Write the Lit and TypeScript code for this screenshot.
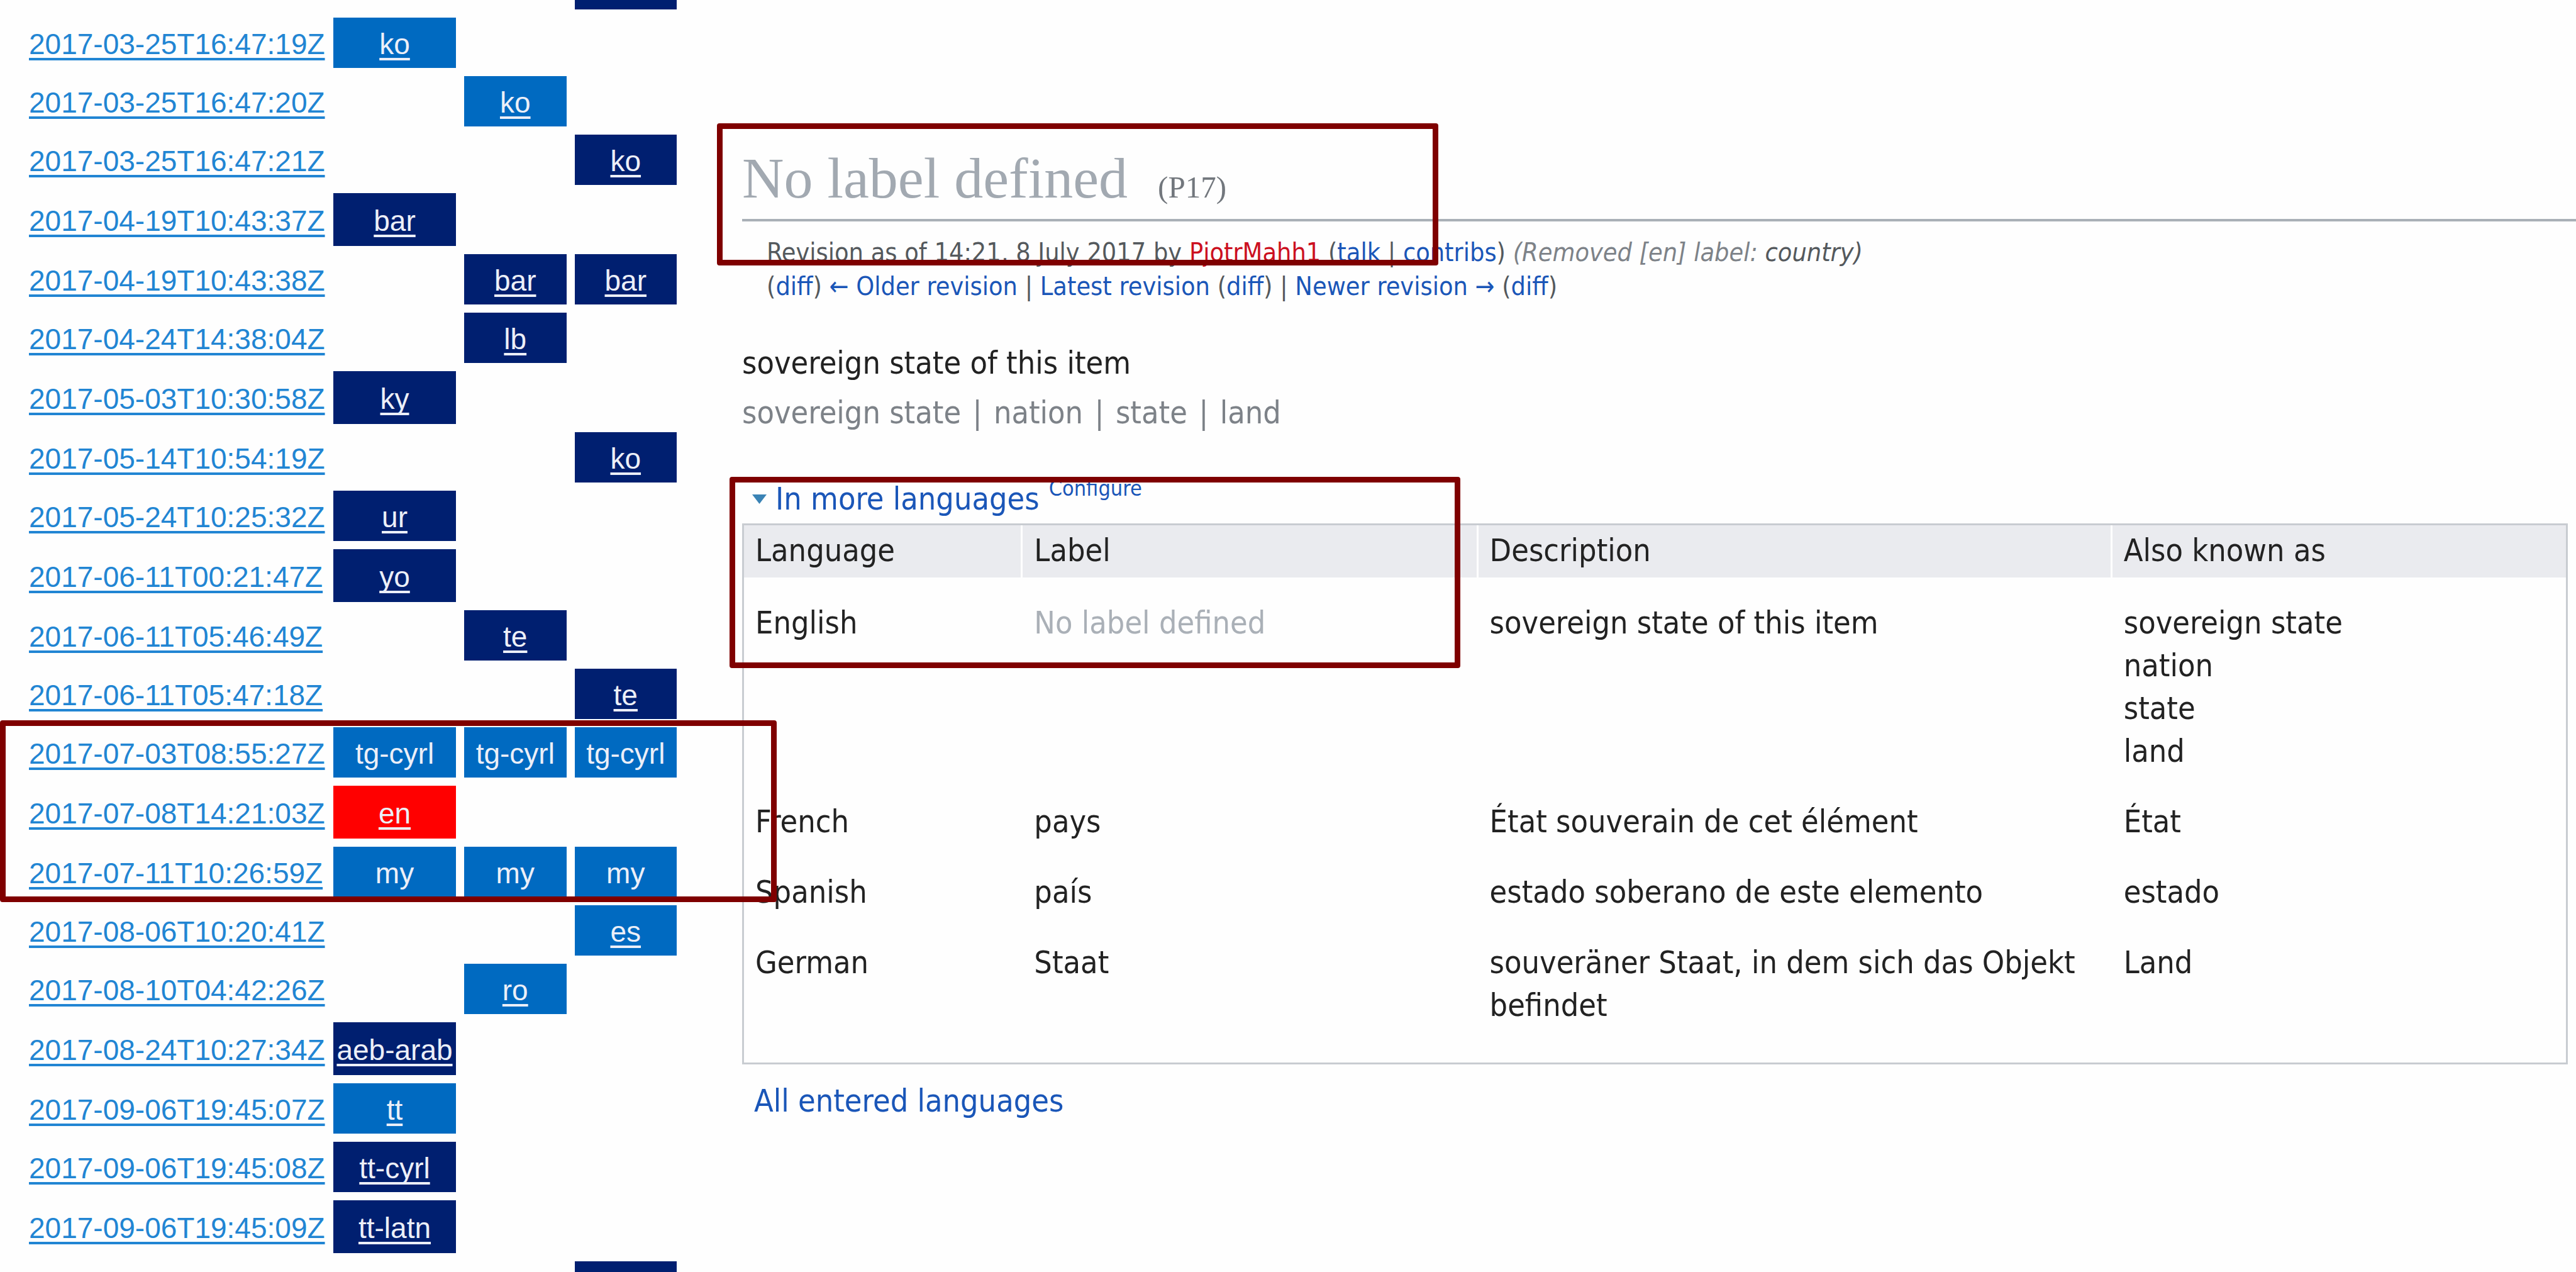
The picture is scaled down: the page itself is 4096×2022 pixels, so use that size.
import { LitElement, html, css, nothing } from "lit";
import { customElement } from "lit/decorators.js";

type Tone = "light" | "dark" | "alert";
interface Edit {
  col: number;
  code: string;
  tone: Tone;
  plain?: boolean;
}
interface Entry {
  time: string;
  edits: Edit[];
  tall?: boolean;
}

const e = (col: number, code: string, tone: Tone = "dark", plain = false): Edit => ({ col, code, tone, plain });

const ENTRIES: Entry[] = [
  { time: "", edits: [e(2, "")] },
  { time: "2017-03-25T16:47:19Z", edits: [e(0, "ko", "light")] },
  { time: "2017-03-25T16:47:20Z", edits: [e(1, "ko", "light")] },
  { time: "2017-03-25T16:47:21Z", edits: [e(2, "ko")] },
  { time: "2017-04-19T10:43:37Z", edits: [e(0, "bar")], tall: true },
  { time: "2017-04-19T10:43:38Z", edits: [e(1, "bar"), e(2, "bar")] },
  { time: "2017-04-24T14:38:04Z", edits: [e(1, "lb")] },
  { time: "2017-05-03T10:30:58Z", edits: [e(0, "ky")], tall: true },
  { time: "2017-05-14T10:54:19Z", edits: [e(2, "ko")] },
  { time: "2017-05-24T10:25:32Z", edits: [e(0, "ur")] },
  { time: "2017-06-11T00:21:47Z", edits: [e(0, "yo")], tall: true },
  { time: "2017-06-11T05:46:49Z", edits: [e(1, "te")] },
  { time: "2017-06-11T05:47:18Z", edits: [e(2, "te")] },
  {
    time: "2017-07-03T08:55:27Z",
    edits: [e(0, "tg-cyrl", "light", true), e(1, "tg-cyrl", "light", true), e(2, "tg-cyrl", "light", true)],
  },
  { time: "2017-07-08T14:21:03Z", edits: [e(0, "en", "alert")], tall: true },
  {
    time: "2017-07-11T10:26:59Z",
    edits: [e(0, "my", "light", true), e(1, "my", "light", true), e(2, "my", "light", true)],
  },
  { time: "2017-08-06T10:20:41Z", edits: [e(2, "es", "light")] },
  { time: "2017-08-10T04:42:26Z", edits: [e(1, "ro", "light")] },
  { time: "2017-08-24T10:27:34Z", edits: [e(0, "aeb-arab")], tall: true },
  { time: "2017-09-06T19:45:07Z", edits: [e(0, "tt", "light")] },
  { time: "2017-09-06T19:45:08Z", edits: [e(0, "tt-cyrl")] },
  { time: "2017-09-06T19:45:09Z", edits: [e(0, "tt-latn")], tall: true },
  { time: "", edits: [e(2, "")] },
];

@customElement("edit-timeline")
export class EditTimeline extends LitElement {
  static styles = css`
    :host {
      display: block;
      font-family: "Liberation Sans", Arial, sans-serif;
      font-size: 46px;
      line-height: 76px;
    }
    .grid {
      margin: -78px 0 0 33px;
      border-collapse: separate;
      border-spacing: 13px;
      table-layout: fixed;
      width: 1056px;
    }
    .time-col { width: 471px; }
    .first-col { width: 195px; }
    td {
      box-sizing: border-box;
      height: 80px;
      padding: 4px 0 0;
      text-align: center;
      vertical-align: middle;
      white-space: nowrap;
    }
    .tall td { height: 84px; }
    .time { text-align: left; }
    a {
      color: #eceff8;
      text-decoration: underline 4px;
      text-underline-offset: 6px;
      text-decoration-skip-ink: none;
    }
    .time a { color: #2185d3; }
    .plain { text-decoration: none; }
    .light { background: #006ac1; }
    .dark { background: #001f70; }
    .alert { background: #ff0000; }
  `;

  private cell(entry: Entry, col: number) {
    const edit = entry.edits.find((x) => x.col === col);
    if (!edit) return html`<td></td>`;
    return html`<td class=${edit.tone}>${edit.code
      ? html`<a class=${edit.plain ? "plain" : ""} href="#${edit.code}">${edit.code}</a>`
      : nothing}</td>`;
  }

  render() {
    return html`
      <table class="grid">
        <colgroup><col class="time-col" /><col class="first-col" /><col /><col /></colgroup>
        <tbody>
          ${ENTRIES.map((entry) => html`
            <tr class=${entry.tall ? "tall" : ""}>
              <td class="time">${entry.time ? html`<a href="#${entry.time}">${entry.time}</a>` : nothing}</td>
              ${[0, 1, 2].map((col) => this.cell(entry, col))}
            </tr>`)}
        </tbody>
      </table>`;
  }
}

const TERMS = [
  { lang: "English", label: "", text: "sovereign state of this item", aka: ["sovereign state", "nation", "state", "land"] },
  { lang: "French", label: "pays", text: "État souverain de cet élément", aka: ["État"] },
  { lang: "Spanish", label: "país", text: "estado soberano de este elemento", aka: ["estado"] },
  { lang: "German", label: "Staat", text: "souveräner Staat, in dem sich das Objekt befindet", aka: ["Land"] },
];

@customElement("property-page")
export class PropertyPage extends LitElement {
  static styles = css`
    :host {
      display: block;
      color: #222;
      font-family: "DejaVu Sans Condensed", "DejaVu Sans", sans-serif;
      font-size: 50px;
      line-height: 68px;
    }
    h1 {
      margin: 0;
      padding: 233px 0 15px;
      border-bottom: 4px solid #a9b0b7;
      color: #a2a9b1;
      font: 92px/100px "Liberation Serif", "Times New Roman", serif;
    }
    .id {
      margin-left: 48px;
      color: #72777d;
      font-size: 49px;
      line-height: 50px;
    }
    a, button { color: #1a56b8; text-decoration: none; }
    p { margin: 0; }
    .revision {
      margin: 22px 0 0 39px;
      color: #54595d;
      font-size: 41px;
      line-height: 54px;
    }
    .revision .missing { color: #cc1020; }
    .summary { color: #7d8288; font-style: italic; }
    .summary span { color: #54595d; }
    .description { margin-top: 61px; }
    .aliases { margin-top: 11px; color: #7d8288; }
    .sep { margin: 0 4px; }
    .more {
      display: flex;
      gap: 15px;
      margin: 69px 0 5px 16px;
    }
    button {
      display: flex;
      align-items: center;
      gap: 14px;
      padding: 0;
      border: 0;
      background: none;
      font: inherit;
    }
    .caret { width: 23px; height: 15px; fill: #3a83b5; }
    .configure { font-size: 34px; line-height: 34px; }
    .terms {
      width: calc(100% - 13px);
      border: 3px solid #c8ccd1;
      border-spacing: 0;
      table-layout: fixed;
    }
    .c-lang { width: 15.2%; }
    .c-label { width: 25%; }
    .c-text { width: 34.8%; }
    th {
      padding: 6px 0 9px 18px;
      border-left: 3px solid #fff;
      background: #eaebef;
      font-weight: normal;
      text-align: left;
    }
    th:first-child { border-left: 0; }
    td {
      padding: 22px 0 22px 21px;
      vertical-align: top;
    }
    td:first-child { padding-left: 18px; }
    tbody tr:first-child td { padding-top: 38px; }
    tbody tr:last-child td { padding-bottom: 57px; }
    .empty { color: #aab0b7; }
    ul { margin: 0; padding: 0; list-style: none; }
    .all { margin: 24px 0 0 19px; }
  `;

  render() {
    return html`
      <h1>No label defined<span class="id">(P17)</span></h1>
      <div class="revision">
        <p>Revision as of 14:21, 8 July 2017 by <a class="missing" href="#user">PjotrMahh1</a> (<a href="#talk">talk</a> | <a href="#contribs">contribs</a>) <span class="summary">(Removed [en] label: <span>country)</span></span></p>
        <p>(<a href="#diff-old">diff</a>) <a href="#older">← Older revision</a> | <a href="#latest">Latest revision</a> (<a href="#diff-latest">diff</a>) | <a href="#newer">Newer revision →</a> (<a href="#diff-new">diff</a>)</p>
      </div>
      <p class="description">sovereign state of this item</p>
      <p class="aliases">${TERMS[0].aka.map((a, i) => html`${i ? html` <span class="sep">|</span> ` : nothing}${a}`)}</p>
      <div class="more">
        <button type="button" aria-expanded="true">
          <svg class="caret" viewBox="0 0 23 15" aria-hidden="true"><path d="M0 0h23L11.5 15z" /></svg>In more languages
        </button>
        <a class="configure" href="#configure">Configure</a>
      </div>
      <table class="terms">
        <colgroup><col class="c-lang" /><col class="c-label" /><col class="c-text" /><col /></colgroup>
        <thead>
          <tr><th scope="col">Language</th><th scope="col">Label</th><th scope="col">Description</th><th scope="col">Also known as</th></tr>
        </thead>
        <tbody>
          ${TERMS.map((t) => html`
            <tr>
              <td>${t.lang}</td>
              <td class=${t.label ? "" : "empty"}>${t.label || "No label defined"}</td>
              <td>${t.text}</td>
              <td><ul>${t.aka.map((a) => html`<li>${a}</li>`)}</ul></td>
            </tr>`)}
        </tbody>
      </table>
      <p class="all"><a href="#all">All entered languages</a></p>`;
  }
}

@customElement("app-root")
export class AppRoot extends LitElement {
  static styles = css`
    :host {
      display: flex;
      gap: 91px;
      position: relative;
      height: 100vh;
      overflow: hidden;
      background: #fefefe;
    }
    edit-timeline { flex: none; }
    property-page { flex: 1; min-width: 0; }
    .mark {
      position: absolute;
      box-sizing: border-box;
      border: 9px solid #7f0000;
      border-radius: 4px;
      pointer-events: none;
    }
    .mark-title { left: 1140px; top: 196px; width: 1147px; height: 226px; }
    .mark-terms { left: 1160px; top: 758px; width: 1162px; height: 304px; }
    .mark-edits { left: 0; top: 1145px; width: 1235px; height: 289px; }
  `;

  render() {
    return html`
      <edit-timeline></edit-timeline>
      <property-page></property-page>
      <div class="mark mark-title"></div>
      <div class="mark mark-terms"></div>
      <div class="mark mark-edits"></div>`;
  }
}
